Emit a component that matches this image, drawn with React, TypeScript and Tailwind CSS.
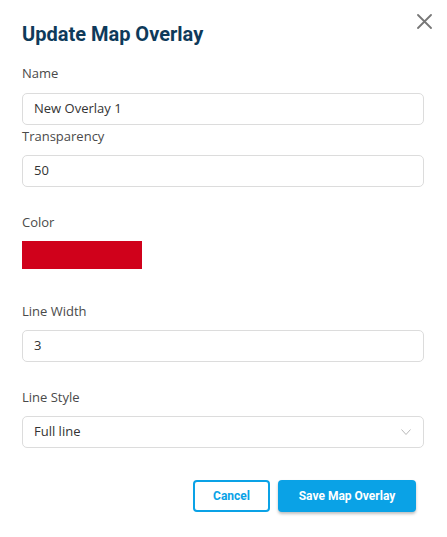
function Field({ label, value, className }: { label: string; value: string; className?: string }) {
  return (
    <div className={className}>
      <label className="block text-[13px] leading-[18px] text-[#4a4a4a]">{label}</label>
      <div className="mt-[10px] h-[32px] rounded-[5px] border border-[#dcdcdc] px-[11px] flex items-center text-[13px] text-[#333]">
        {value}
      </div>
    </div>
  );
}

export default function App() {
  return (
    <div className="relative w-[447px] h-[537px] bg-white pl-[22px] pr-[23px] pt-[22px] font-['Open_Sans',sans-serif]">
      <button className="absolute left-[417px] top-[14px] text-[#777]">
        <svg width="15" height="15" viewBox="0 0 15 15" className="block">
          <path d="M1 1L14 14M14 1L1 14" stroke="currentColor" strokeWidth="1.8" strokeLinecap="round" />
        </svg>
      </button>
      <h2 className="font-['Roboto',sans-serif] font-bold text-[20px] leading-[24px] text-[#0e3a5a]">Update Map Overlay</h2>

      <label className="block mt-[18px] text-[13px] leading-[18px] text-[#4a4a4a]">Name</label>
      <div className="mt-[11px] h-[32px] rounded-[5px] border border-[#dcdcdc] px-[11px] flex items-center text-[13px] text-[#333]">
        New Overlay 1
      </div>

      <Field label="Transparency" value="50" className="mt-[2px]" />

      <label className="block mt-[26px] text-[13px] leading-[18px] text-[#4a4a4a]">Color</label>
      <div className="mt-[10px] w-[120px] h-[28px] bg-[#d0011b]" />

      <Field label="Line Width" value="3" className="mt-[33px]" />

      <label className="block mt-[26px] text-[13px] leading-[18px] text-[#4a4a4a]">Line Style</label>
      <div className="mt-[10px] h-[32px] rounded-[5px] border border-[#dcdcdc] pl-[11px] pr-[12px] flex items-center justify-between text-[13px] text-[#333]">
        <span>Full line</span>
        <svg width="10" height="6" viewBox="0 0 10 6" className="block">
          <path d="M0.5 0.5L5 5.5L9.5 0.5" fill="none" stroke="#b8b8b8" strokeWidth="1" />
        </svg>
      </div>

      <div className="mt-[32px] flex justify-end gap-[8px] pr-[8px] font-['Roboto',sans-serif] font-bold text-[12px]">
        <button className="w-[77px] h-[32px] rounded-[4px] border-2 border-[#0aa2e6] text-[#0aa2e6]">Cancel</button>
        <button className="w-[138px] h-[32px] rounded-[4px] bg-[#0aa2e6] text-white shadow-[0_2px_3px_rgba(0,0,0,0.25)]">Save Map Overlay</button>
      </div>
    </div>
  );
}
